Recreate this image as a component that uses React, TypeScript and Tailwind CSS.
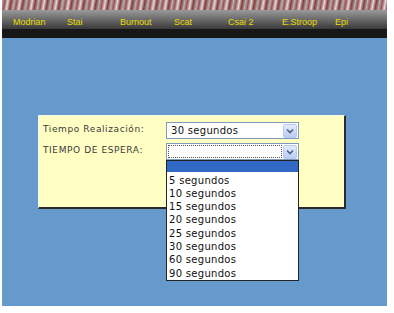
import React from "react";

const navItems = [
  { label: "Modrian", w: "w-[54px]" },
  { label: "Stai", w: "w-[53px]" },
  { label: "Burnout", w: "w-[54px]" },
  { label: "Scat", w: "w-[54px]" },
  { label: "Csai 2", w: "w-[54px]" },
  { label: "E.Stroop", w: "w-[53px]" },
  { label: "Epi", w: "w-[40px]" },
];

const options = ["5 segundos", "10 segundos", "15 segundos", "20 segundos", "25 segundos", "30 segundos", "60 segundos", "90 segundos"];

function Arrow() {
  return (
    <div className="w-[14px] h-[14px] mt-[1px] mr-[1px] rounded-[2px] bg-gradient-to-b from-[#e4ecfb] to-[#b9cdf4] border border-[#b7c9ef] flex items-center justify-center">
      <svg width="8" height="6" viewBox="0 0 8 6">
        <path d="M1 1.5 L4 4.5 L7 1.5" stroke="#4d6185" strokeWidth="1.6" fill="none" />
      </svg>
    </div>
  );
}

export default function App() {
  return (
    <div className="w-[394px] h-[313px] bg-white overflow-hidden" style={{ fontFamily: "'DejaVu Sans', Verdana, sans-serif" }}>
      <div className="ml-[2px] w-[385px]">
        {/* banner strip */}
        <div className="h-[10px] bg-[repeating-linear-gradient(100deg,#b8b8b8_0px,#9a5050_3px,#dcdada_6px,#8a3838_9px,#a8a4a4_12px)]" />
        {/* menu */}
        <div className="h-[19px] bg-gradient-to-b from-[#9a9a9a] via-[#6a6a6a] to-[#3a3a3a] flex items-center pl-[11px] pt-[5px]">
          {navItems.map((n) => (
            <span key={n.label} className={`${n.w} text-[9px] text-[#e8dc00] leading-none`} style={{ fontFamily: "'Liberation Sans', Arial, sans-serif" }}>
              {n.label}
            </span>
          ))}
        </div>
        <div className="h-[9px] bg-[#171717]" />
        {/* body */}
        <div className="h-[268px] bg-[#6699cc] pt-[77px] pl-[36px]">
          <div className="relative w-[308px] h-[94px] bg-[#ffffc4] border-t border-l border-[#f4f4e8] border-r-2 border-b-2 border-r-[#2a2a2a] border-b-[#2a2a2a] pt-[6px] pl-[4px] flex flex-col gap-[5px]">
            <div className="flex items-center h-[16px]">
              <span className="w-[123px] text-[9px] tracking-[0.6px] text-[#3a3a3a]">Tiempo Realización:</span>
              <div className="w-[133px] h-[17px] bg-white border border-[#7f9db9] flex justify-between">
                <span className="pl-[4px] text-[10px] leading-[15px] text-[#111] tracking-[0.3px]">30 segundos</span>
                <Arrow />
              </div>
            </div>
            <div className="flex items-center h-[16px]">
              <span className="w-[123px] text-[9px] tracking-[0.6px] text-[#3a3a3a]">TIEMPO DE ESPERA:</span>
              <div className="relative w-[133px] h-[17px] bg-white border border-[#7f9db9] flex justify-between">
                <div className="m-[1px] w-[115px] border border-dotted border-[#555]" />
                <Arrow />
                <div className="absolute left-[-1px] top-[16px] w-[133px] bg-white border border-[#222] z-10">
                  <div className="h-[11px] bg-[#316ac5]" />
                  <div className="pt-[2px]">
                    {options.map((o) => (
                      <div key={o} className="h-[13.3px] pl-[2px] text-[10px] leading-[13px] text-[#111] tracking-[0.3px]">
                        {o}
                      </div>
                    ))}
                  </div>
                </div>
              </div>
            </div>
          </div>
        </div>
      </div>
    </div>
  );
}
